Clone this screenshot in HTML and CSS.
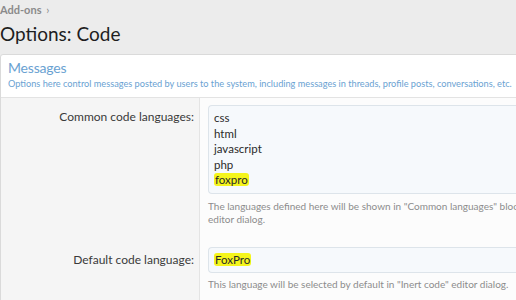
FILE: index.html
```html
<!DOCTYPE html>
<html lang="en">
<head>
    <meta charset="UTF-8">
    <title>Options: Code</title>
    <link rel="stylesheet" href="styles.css">
</head>
<body>

<div class="crumbs">Add-ons <span class="chev">&#8250;</span></div>
<h1 class="page-title">Options: Code</h1>

<div class="block">
    <!-- Group header -->
    <div class="block-header">
        <h2>Messages</h2>
        <p>Options here control messages posted by users to the system, including messages in threads, profile posts, conversations, etc.</p>
    </div>

    <!-- Option rows -->
    <div class="form-row">
        <label class="row-label" for="langs">Common code languages:</label>
        <div class="row-input">
            <div class="textarea" id="langs">
                <div>css</div>
                <div>html</div>
                <div>javascript</div>
                <div>php</div>
                <div><span class="mark">foxpro</span></div>
            </div>
            <p class="explain">The languages defined here will be shown in "Common languages" block in "Insert code"<br>editor dialog.</p>
        </div>
    </div>

    <div class="form-row row-second">
        <label class="row-label" for="defLang">Default code language:</label>
        <div class="row-input">
            <div class="textbox" id="defLang"><span class="mark">FoxPro</span></div>
            <p class="explain">This language will be selected by default in "Inert code" editor dialog.</p>
        </div>
    </div>
</div>

</body>
</html>
```

FILE: styles.css
```css
/* Page */
body {
    margin: 0;
    background: #ececec;
    font-family: 'Lato', sans-serif;
    color: #333;
    overflow: hidden;
}

.crumbs {
    padding-top: 3px;
    font-size: 11px;
    font-weight: bold;
    color: #8a8a8a;
    line-height: 14px;
}

.crumbs .chev {
    font-weight: normal;
    margin-left: 2px;
}

.page-title {
    margin: 4px 0 0 0;
    font-size: 19px;
    font-weight: normal;
    line-height: 26px;
    color: #1e1e1e;
}

/* Options block */
.block {
    margin-top: 7px;
    width: 560px;
    background: #fff;
    border: 1px solid #dadada;
    border-radius: 3px 0 0 0;
}

.block-header {
    padding: 4px 7px 7px;
    border-bottom: 1px solid #e3e3e3;
}

.block-header h2 {
    margin: 0;
    font-size: 14px;
    font-weight: normal;
    letter-spacing: -0.2px;
    line-height: 18px;
    color: #6aa2d2;
}

.block-header p {
    margin: 0;
    font-size: 9.2px;
    line-height: 13px;
    color: #6aa2d2;
    white-space: nowrap;
}

/* Rows */
.form-row {
    display: grid;
    grid-template-columns: 199px 1fr;
}

.row-label {
    background: #f5f5f5;
    border-right: 1px solid #e4e4e4;
    text-align: right;
    padding: 11px 5px 0 0;
    font-size: 12px;
    line-height: 16px;
    color: #3a3a3a;
}

.row-second .row-label {
    padding-top: 12px;
}

.row-input {
    background: #fcfcfc;
    padding: 7px 0 0 8px;
}

.textarea,
.textbox {
    background: #f6f9fc;
    border: 1px solid #dde4ea;
    border-right: none;
    border-radius: 4px 0 0 4px;
    padding: 4px 5px 5px;
    font-size: 11.5px;
    line-height: 15.5px;
    color: #2a2a2a;
}

.textbox {
    padding: 4px 5px;
    line-height: 16px;
}

.mark {
    background: #f5f51c;
    border-radius: 3px;
    padding: 0 1px;
}

.explain {
    margin: 6px 0 14px;
    font-size: 10px;
    line-height: 13px;
    color: #8c8c8c;
    white-space: nowrap;
}

.row-second .explain {
    margin-top: 5px;
}
```
